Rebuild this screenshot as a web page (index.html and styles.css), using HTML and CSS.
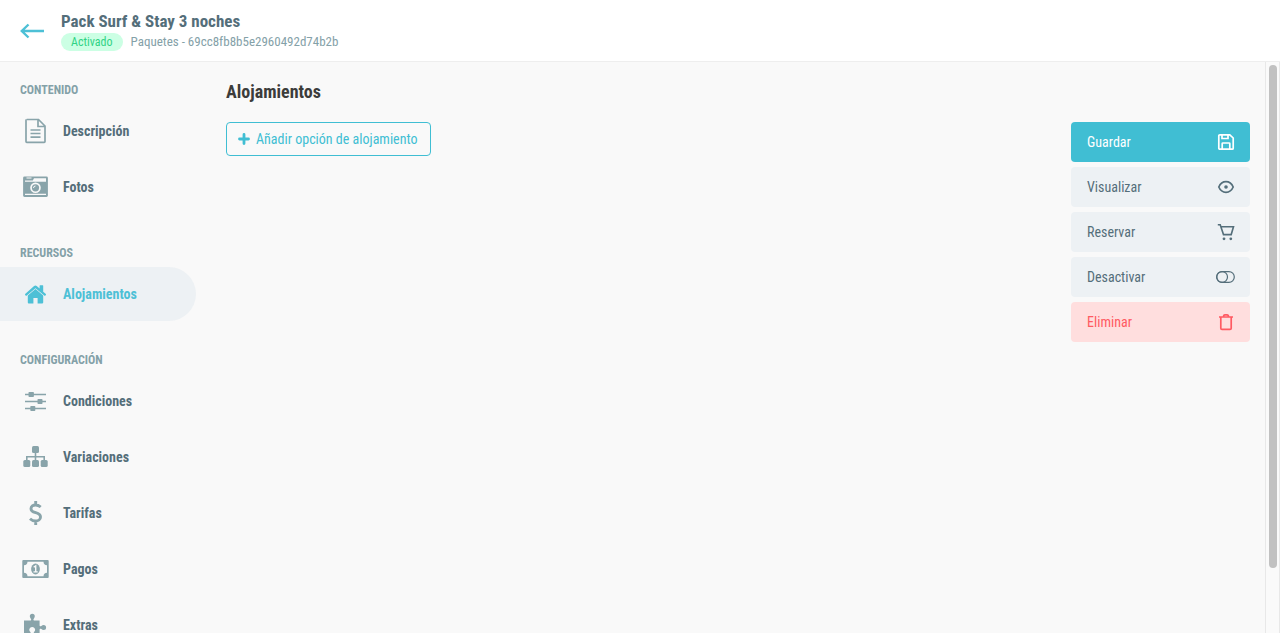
FILE: index.html
```html
<!DOCTYPE html>
<html lang="es">
<head>
<meta charset="utf-8">
<meta name="viewport" content="width=device-width, initial-scale=1">
<title>Pack Surf &amp; Stay 3 noches</title>
<link rel="stylesheet" href="styles.css">
</head>
<body>
<header class="topbar">
  <a class="back" href="#" aria-label="Volver">
    <svg width="24" height="16" viewBox="0 0 24 16" fill="none" stroke="currentColor" stroke-width="2.4"><path d="M24 8H2M8.500 1.500L1.800 8l6.700 6.500"/></svg>
  </a>
  <div>
    <h1 class="title">Pack Surf &amp; Stay 3 noches</h1>
    <div class="meta"><span class="badge">Activado</span><span>Paquetes - 69cc8fb8b5e2960492d74b2b</span></div>
  </div>
</header>
<div class="layout">
  <nav class="sidebar">
    <section class="group">
      <h2 class="group-title">CONTENIDO</h2>
      <a class="item" href="#">
        <svg class="icon" viewBox="0 0 31 28" fill="none" stroke="currentColor" stroke-width="1.700"><path d="M7 2.500h11.500l6.500 6.500v15.600a.8.800 0 0 1-.8.800H6.800a.8.800 0 0 1-.8-.8V3.300a.8.800 0 0 1 .8-.8M18 3v6.500h6.500M10.500 13h10M10.500 16.500h10M10.500 20.200h10"/></svg>
        Descripción</a>
      <a class="item" href="#">
        <svg class="icon" viewBox="0 0 31 28"><path fill="currentColor" fill-rule="evenodd" d="M4.500 3.500h22a1.400 1.400 0 0 1 1.400 1.400v17.700a1.400 1.400 0 0 1-1.400 1.400h-22a1.400 1.400 0 0 1-1.400-1.400V4.900a1.400 1.400 0 0 1 1.400-1.400zM5 20.800v1.300h21v-1.300zM14 5.200l-1.200 2.300H5v1.300h21V5.200zM6.500 4.600v1h5v-1zM15.500 9.500a5.300 5.300 0 1 0 0 10.600 5.300 5.300 0 0 0 0-10.600z"/><circle cx="15.500" cy="14.800" r="3.600" fill="currentColor"/><path d="M13.500 15a2 2 0 0 1 2-2" fill="none" stroke="#f9f9f9"/></svg>
        Fotos</a>
    </section>
    <section class="group">
      <h2 class="group-title">RECURSOS</h2>
      <a class="item active" href="#" aria-current="page">
        <svg class="icon" viewBox="0 0 31 28" fill="currentColor"><path d="M15.500 9l-7.700 6.500v7.100c0 .5.400.9.900.9h4.700v-5.500h4.200v5.500h4.700c.5 0 .9-.4.900-.9v-7.100z"/><path d="M25.900 14l-2.700-2.300V5.800c0-.3-.2-.5-.5-.5h-2.600c-.3 0-.5.200-.5.500v2.800l-2.900-2.500c-.8-.7-1.800-.7-2.600 0L5.100 14l-.1.700.8 1 .7.100 9-7.600 9 7.600.7-.1.800-1z"/></svg>
        Alojamientos</a>
    </section>
    <section class="group">
      <h2 class="group-title">CONFIGURACIÓN</h2>
      <a class="item" href="#">
        <svg class="icon" viewBox="0 0 31 28" fill="currentColor"><path d="M5 6.700h21v1.600H5zM5 13.700h21v1.600H5zM5 20.700h21v1.600H5z"/><rect x="8.500" y="5" width="5.400" height="5" rx=".8"/><rect x="17.500" y="12" width="5" height="5" rx=".8"/><rect x="10.300" y="19" width="5" height="5" rx=".8"/></svg>
        Condiciones</a>
      <a class="item" href="#">
        <svg class="icon" viewBox="0 0 31 28" fill="currentColor"><rect x="12" y="3" width="7" height="7" rx="1.500"/><rect x="3.300" y="17" width="7" height="7" rx="1.500"/><rect x="12" y="17" width="7" height="7" rx="1.500"/><rect x="20.700" y="17" width="7" height="7" rx="1.500"/><path d="M15.500 9v8M6.800 17v-3.300h17.400V17" fill="none" stroke="currentColor" stroke-width="1.600"/></svg>
        Variaciones</a>
      <a class="item" href="#">
        <svg class="icon" viewBox="0 0 31 28" fill="none" stroke="currentColor" stroke-width="2.900"><path d="M20.700 8C19 6.600 17.400 6 15.600 6 13 6 11 7.400 11 9.700c0 5.200 9.500 2.800 9.500 8.200 0 2.600-2.200 4.100-5 4.100-2.200 0-4-.9-5.500-2.300M15.700 2v4M15.700 22v4"/></svg>
        Tarifas</a>
      <a class="item" href="#">
        <svg class="icon" viewBox="0 0 31 28"><path fill="currentColor" fill-rule="evenodd" d="M3.200 5h24.600a.9.900 0 0 1 .9.900v16.200a.9.900 0 0 1-.9.900H3.200a.9.900 0 0 1-.9-.9V5.900a.9.900 0 0 1 .9-.9zM7.500 6.800A3.600 3.600 0 0 1 4 10.300v7.400a3.600 3.600 0 0 1 3.500 3.500h16a3.600 3.600 0 0 1 3.500-3.500v-7.400a3.600 3.600 0 0 1-3.500-3.500z"/><ellipse cx="15.500" cy="14" rx="4.400" ry="5.400" fill="currentColor"/><path d="M13.700 12.200l2-1.400v5.900M13.500 16.900h4.200" fill="none" stroke="#f9f9f9" stroke-width="1.400"/></svg>
        Pagos</a>
      <a class="item" href="#">
        <svg class="icon" viewBox="0 0 31 28"><path fill="currentColor" d="M4 9.500h6.500c.8 0 .9-1 .3-1.800-.5-.6-1-1.400-1-2.400a2.500 2.500 0 0 1 5 0c0 1-.5 1.800-1 2.400-.6.800-.5 1.800.3 1.800h5.500v5c0 .9 1 1 1.800.4.600-.5 1.200-.9 2.200-.9a2.500 2.500 0 0 1 0 5c-1 0-1.600-.4-2.200-.9-.8-.6-1.800-.5-1.800.4V26H4z"/><path d="M12.200 16a2.800 2.800 0 0 1 1.800 5c-.5.700-.3 3 .6 5H9.800c.9-2 1.100-4.300.6-5a2.800 2.800 0 0 1 1.800-5z" fill="#f9f9f9"/></svg>
        Extras</a>
    </section>
  </nav>
  <main class="content">
    <h2 class="heading">Alojamientos</h2>
    <div class="columns">
      <button class="add" type="button"><svg width="12" height="12" viewBox="0 0 12 12" aria-hidden="true"><path d="M6 1.500v9M1.500 6h9" stroke="currentColor" stroke-width="2.800" stroke-linecap="round"/></svg>Añadir opción de alojamiento</button>
      <div class="actions">
        <button class="action primary" type="button">Guardar
          <svg width="20" height="20" viewBox="0 0 20 20" fill="none" stroke="currentColor" stroke-width="1.700"><path d="M3.800 2.800h10L17.200 6v10.200a1 1 0 0 1-1 1H3.800a1 1 0 0 1-1-1V3.800a1 1 0 0 1 1-1M6 3v3.500h6V3M6.200 17v-5.300a.7.700 0 0 1 .7-.7h6.200a.7.700 0 0 1 .7.700V17"/></svg></button>
        <button class="action" type="button">Visualizar
          <svg width="20" height="20" viewBox="0 0 20 20" fill="none" stroke="currentColor" stroke-width="1.700"><path d="M2.800 10C4.300 6.500 7 4.700 10 4.700s5.700 1.800 7.200 5.300c-1.500 3.500-4.200 5.300-7.200 5.300S4.300 13.500 2.800 10z"/><circle cx="10" cy="10" r="1.800" fill="currentColor" stroke="none"/></svg></button>
        <button class="action" type="button">Reservar
          <svg width="20" height="20" viewBox="0 0 20 20" fill="none" stroke="currentColor" stroke-width="1.600"><path d="M1.800 2.800h2.400l3.300 9.800h7.700l2.300-7.800H5"/><circle cx="8" cy="16.800" r="1.400" fill="currentColor" stroke="none"/><circle cx="14.800" cy="16.800" r="1.400" fill="currentColor" stroke="none"/></svg></button>
        <button class="action" type="button">Desactivar
          <svg width="20" height="20" viewBox="0 0 20 20" fill="none" stroke="currentColor" stroke-width="1.200"><rect x=".700" y="4.600" width="17.600" height="10.800" rx="5.400"/><circle cx="6.100" cy="10" r="5.400"/></svg></button>
        <button class="action danger" type="button">Eliminar
          <svg width="20" height="20" viewBox="0 0 20 20" fill="none" stroke="currentColor" stroke-width="1.700"><path d="M3 5h14M4.800 5v11.200a1.200 1.200 0 0 0 1.200 1.200h8a1.200 1.200 0 0 0 1.200-1.200V5M7.500 4.800C7.500 3.300 8 2.800 9 2.800h2c1 0 1.500.5 1.500 2"/></svg></button>
      </div>
    </div>
  </main>
  <div class="track" aria-hidden="true"><div class="thumb"></div></div>
</div>
</body>
</html>
```
FILE: styles.css
```css
* { box-sizing: border-box; }
body {
  margin: 0;
  height: 100vh;
  display: flex;
  flex-direction: column;
  overflow: hidden;
  background: #f9f9f9;
  color: #546e7a;
  font-family: "Roboto Condensed", Roboto, sans-serif;
  font-size: 14px;
  line-height: 20px;
}
h1, h2 { margin: 0; }
a { color: inherit; text-decoration: none; }
button { font: inherit; cursor: pointer; }
svg { display: block; flex: none; }

.topbar {
  display: flex;
  align-items: center;
  gap: 17px;
  padding: 10px 20px;
  background: #fff;
  border-bottom: 1px solid #eee;
}
.back { color: #4dc0d6; }
.title { font-size: 17px; line-height: 23px; }
.meta {
  display: flex;
  align-items: center;
  gap: 8px;
  color: #84a1a8;
  font-size: 13px;
  line-height: 18px;
}
.badge {
  padding: 0 10px;
  border-radius: 9px;
  background: #ccffe4;
  color: #30d384;
  font-size: 12px;
}

.layout { display: flex; flex: 1; min-height: 0; }
.sidebar { flex: none; width: 196px; padding-top: 19px; overflow: hidden; }
.group { display: flex; flex-direction: column; gap: 2px; margin-bottom: 30px; }
.group-title {
  padding-left: 20px;
  margin-bottom: 3px;
  color: #84a1a8;
  font-size: 12px;
  line-height: 18px;
}
.item {
  display: flex;
  align-items: center;
  gap: 12px;
  height: 54px;
  padding-left: 20px;
  border-radius: 0 27px 27px 0;
  font-weight: 700;
}
.icon { width: 31px; height: 28px; color: #89a4aa; }
.active, .active .icon { color: #4dc0d6; }
.active { background: #edf1f4; }

.content { flex: 1; padding: 18px 15px 0 30px; }
.heading { color: #3c3c3b; font-size: 18px; line-height: 24px; }
.columns {
  display: flex;
  align-items: flex-start;
  justify-content: space-between;
  margin-top: 18px;
}
.add {
  display: flex;
  align-items: center;
  gap: 6px;
  height: 34px;
  padding: 0 13px 0 11px;
  border: 1px solid #40bed3;
  border-radius: 4px;
  background: transparent;
  color: #40bed3;
}
.actions { display: flex; flex-direction: column; gap: 5px; width: 179px; }
.action {
  display: flex;
  align-items: center;
  justify-content: space-between;
  height: 40px;
  padding: 0 14px 0 16px;
  border: 0;
  border-radius: 4px;
  background: #edf1f4;
  color: #546e7a;
}
.primary { background: #40bed3; color: #fff; }
.danger { background: #ffdede; color: #ff5a62; }

.track {
  width: 15px;
  padding: 3px 2px 3px 3px;
  border: solid #e8e8e8;
  border-width: 0 1px;
  background: #fafafa;
}
.thumb { height: 89%; border-radius: 4px; background: #c1c1c1; }
```
